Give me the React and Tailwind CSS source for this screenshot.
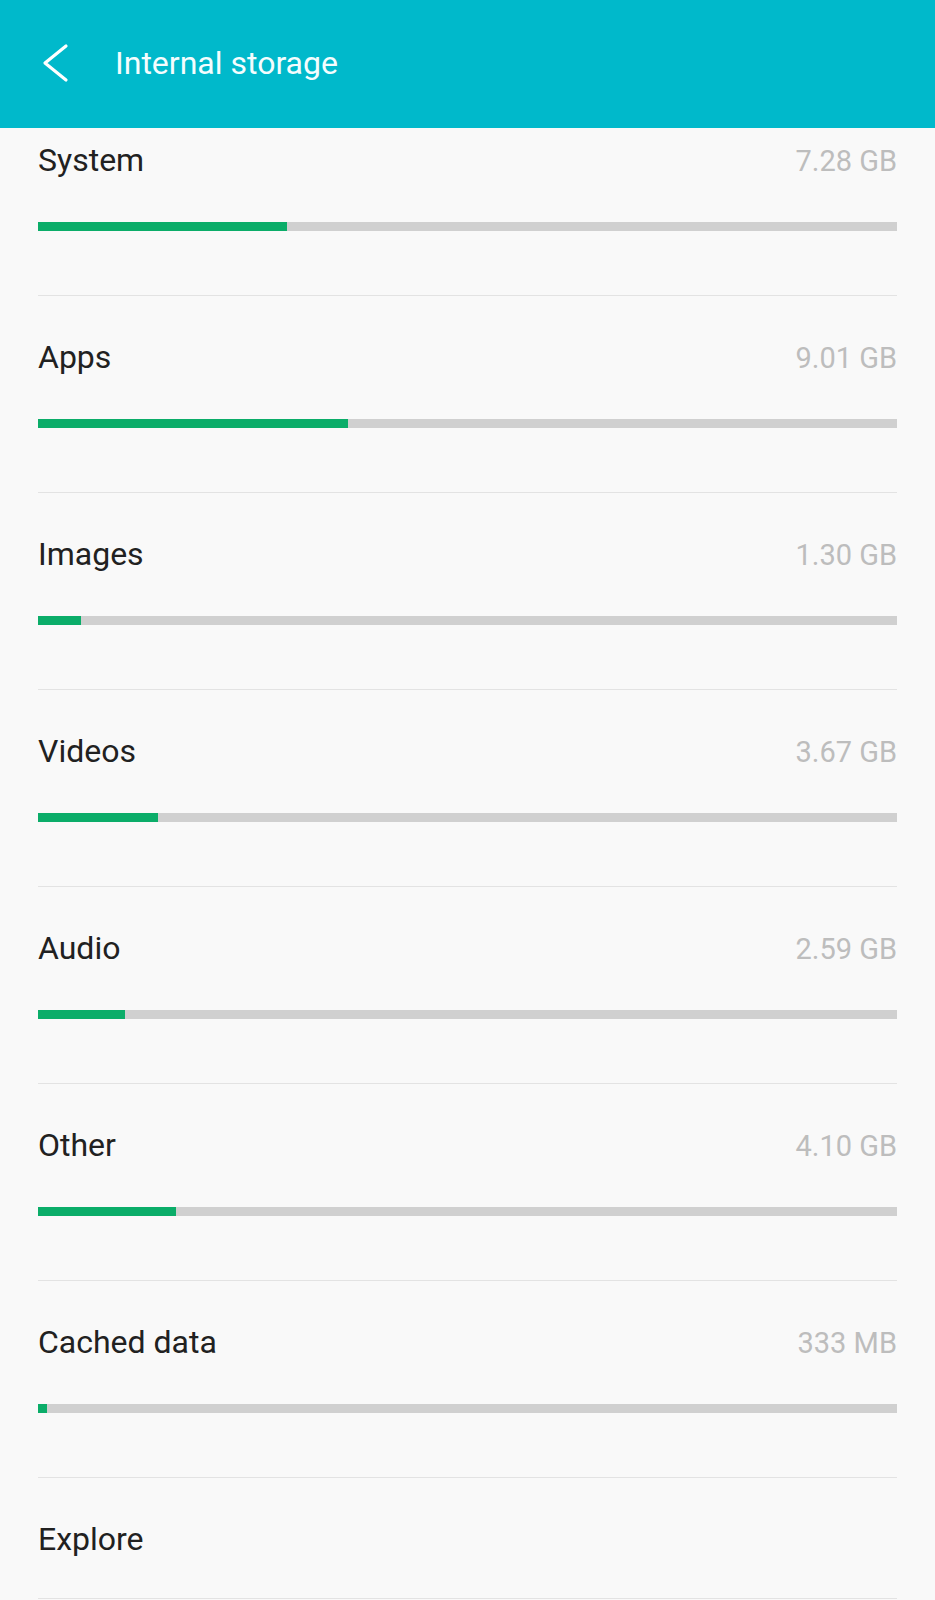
import React from 'react'

const items = [
  { name: 'System', size: '7.28 GB', used: 249 },
  { name: 'Apps', size: '9.01 GB', used: 310 },
  { name: 'Images', size: '1.30 GB', used: 43 },
  { name: 'Videos', size: '3.67 GB', used: 120 },
  { name: 'Audio', size: '2.59 GB', used: 87 },
  { name: 'Other', size: '4.10 GB', used: 138 },
  { name: 'Cached data', size: '333 MB', used: 9 },
]

const TRACK = 859

function StorageRow({ item }) {
  return (
    <div className="mx-[38px] border-t border-[#e3e3e3] pt-[42px] pb-[64px]">
      <div className="flex items-baseline justify-between h-[38px]">
        <span className="text-[32px] leading-[38px] text-[#212121]">{item.name}</span>
        <span className="text-[29px] leading-[38px] text-[#bdbdbd]">{item.size}</span>
      </div>
      <div className="mt-[43px] h-[9px] bg-[#d0d0d0]">
        <div className="h-full bg-[#0bad69]" style={{ width: `${(item.used / TRACK) * 100}%` }} />
      </div>
    </div>
  )
}

export default function App() {
  return (
    <div className="w-[935px] h-[1600px] bg-[#f9f9f9] overflow-hidden flex flex-col" style={{ fontFamily: 'Roboto, "Noto Sans", sans-serif' }}>
      {/* Toolbar */}
      <div className="h-[128px] shrink-0 bg-[#00b9cb] flex items-center pl-[42px] pb-[3px] relative z-10">
        <svg width="28" height="40" viewBox="0 0 28 40" fill="none" stroke="#ffffff" strokeWidth="3.2" strokeLinecap="round" strokeLinejoin="round">
          <polyline points="24,3 3,20 24,37" />
        </svg>
        <span className="ml-[45px] text-[32px] leading-[38px] text-[#f4fdfe]">Internal storage</span>
      </div>

      {/* Scrolled list */}
      <div className="flex-1 overflow-hidden">
        <div className="-mt-[30px]">
          {items.map(it => (
            <StorageRow key={it.name} item={it} />
          ))}
          <div className="mx-[38px] border-t border-b border-[#e3e3e3] pt-[42px] pb-[40px]">
            <span className="block text-[32px] leading-[38px] text-[#212121]">Explore</span>
          </div>
        </div>
      </div>
    </div>
  )
}
